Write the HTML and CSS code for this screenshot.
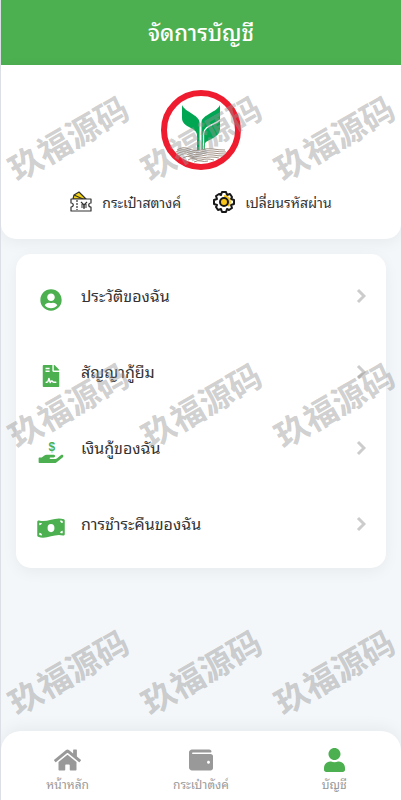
FILE: index.html
```html
<!DOCTYPE html>
<html lang="th">
<head>
    <meta charset="UTF-8">
    <meta name="viewport" content="width=device-width, initial-scale=1.0">
    <title>จัดการบัญชี</title>
    <link rel="stylesheet" href="styles.css">
</head>
<body>

    <header class="header">
        <h1>จัดการบัญชี</h1>
    </header>

    <main>
        <!-- Profile -->
        <section class="profile">
            <svg class="logo" viewBox="0 0 80 80" role="img" aria-label="Logo">
                <circle cx="40" cy="40" r="37" fill="#fff" stroke="#ee1c2e" stroke-width="6"/>
                <path fill="#00a651" d="M21 15c3 7 17 10 17.500 17v28H36V45c0-8-15-7-15-17z"/>
                <path fill="#00a651" d="M59 15c-3 7-18 10-18.500 17v28H44v-6c1-5 15-5 15-16z"/>
                <path fill="none" stroke="#fff" stroke-width="1.300" d="M59 30c-5 5-16 5-16.500 14v16"/>
                <g fill="none" stroke="#a39488" stroke-width="1">
                    <path d="M16 60q6-4 12-1t12 1 12-1 12 1"/>
                    <path d="M15 62q6-4 13-1t12 1 12-1 13 1"/>
                    <path d="M16 64q6-4 12-1t12 1 12-1 12 1"/>
                    <path d="M18 66q5-4 10-1t12 1 12-1 10 1"/>
                    <path d="M22 68q4-3 8-1t10 1 10-1 8 1"/>
                    <path d="M27 70q4-3 7-1t6 1 6-1 7 1"/>
                    <path d="M33 72q4-2 7-1t7 0"/>
                </g>
            </svg>

            <div class="actions">
                <a href="#">
                    <svg class="action-icon" viewBox="0 0 22 22" fill="none" stroke="#333" stroke-width="1.200" stroke-linejoin="round">
                        <path fill="#f5d414" d="M3 8l1-4 5-3 7 7z"/>
                        <path d="M4 4l9 4"/>
                        <path fill="#fff" d="M1 8h20v4c-3 0-3 4 0 4v4H1v-4c3 0 3-4 0-4z"/>
                        <path d="M7 9v10" stroke-dasharray="2 1"/>
                        <path d="M11 11l3 3 3-3M14 14v4M11 14h6M11 16h6"/>
                    </svg>
                    <span>กระเป๋าสตางค์</span>
                </a>
                <a href="#">
                    <svg class="action-icon" viewBox="0 0 22 22" fill="none" stroke="#181818" stroke-width="2" stroke-linejoin="round">
                        <path d="M9 1h4l1 3 3-1 2 3-1 2 3 1v4l-3 1 1 3-3 2-2-1-1 3H9l-1-3-3 1-2-3 1-2-3-1V9l3-1-1-3 3-2 2 1z"/>
                        <path stroke="#f8c51c" d="M11 5a6 6 0 0 1 6 6 6 6 0 0 1-2 4"/>
                        <circle cx="11" cy="11" r="4" fill="#f8c51c"/>
                    </svg>
                    <span>เปลี่ยนรหัสผ่าน</span>
                </a>
            </div>
        </section>

        <!-- Account menu -->
        <nav class="menu">
            <a href="#">
                <svg class="menu-icon" viewBox="0 0 496 512"><path d="M248 8C111 8 0 119 0 256s111 248 248 248 248-111 248-248S385 8 248 8zm0 96c48.600 0 88 39.400 88 88s-39.400 88-88 88-88-39.400-88-88 39.400-88 88-88zm0 344c-58.700 0-111.300-26.600-146.500-68.200 18.800-35.400 55.600-59.800 98.500-59.800 2.400 0 4.800.4 7.100 1.100 13 4.200 26.600 6.900 40.900 6.900 14.300 0 28-2.700 40.900-6.900 2.300-.7 4.700-1.100 7.100-1.100 42.900 0 79.700 24.400 98.500 59.800C359.300 421.400 306.700 448 248 448z"/></svg>
                <span>ประวัติของฉัน</span>
                <svg class="chevron" viewBox="0 0 10 16"><path d="M2 2l6 6-6 6"/></svg>
            </a>
            <a href="#">
                <svg class="menu-icon" viewBox="0 0 384 512">
                    <path d="M224 136V0H24C10.700 0 0 10.700 0 24v464c0 13.300 10.700 24 24 24h336c13.300 0 24-10.700 24-24V160H248c-13.200 0-24-10.800-24-24zM377 105L279 7c-4-4-10-7-17-7h-6v128h128v-6c0-6-2-12-7-17z"/>
                    <path fill="#fff" d="M64 64h96v32H64zM64 128h96v32H64z"/>
                    <path fill="none" stroke="#fff" stroke-width="34" stroke-linecap="round" stroke-linejoin="round" d="M80 400h16c18 0 22-8 27-22l21-64 31 94c18-44 44-44 58-18 6 8 14 10 23 10h48"/>
                </svg>
                <span>สัญญากู้ยืม</span>
                <svg class="chevron" viewBox="0 0 10 16"><path d="M2 2l6 6-6 6"/></svg>
            </a>
            <a href="#">
                <svg class="menu-icon" viewBox="0 0 576 512">
                    <path d="M565.300 328.100c-11.800-10.700-30.200-10-42.600 0L430.300 402c-11.300 9.100-25.400 14-40 14H272c-8.800 0-16-7.200-16-16s7.200-16 16-16h78.300c15.900 0 30.700-10.900 33.300-26.600 3.300-20-12.100-37.400-31.600-37.400H192c-27 0-53.100 9.300-74.100 26.300L71.400 384H16c-8.800 0-16 7.200-16 16v96c0 8.800 7.200 16 16 16h356.800c14.500 0 28.600-4.900 40-14L564 377c15.200-12.100 16.400-35.300 1.300-48.900z"/>
                    <text class="dollar" x="310" y="222" text-anchor="middle">$</text>
                </svg>
                <span>เงินกู้ของฉัน</span>
                <svg class="chevron" viewBox="0 0 10 16"><path d="M2 2l6 6-6 6"/></svg>
            </a>
            <a href="#">
                <svg class="menu-icon" viewBox="0 0 640 512">
                    <path d="M621.160 54.460C582.370 38.190 543.550 32 504.750 32c-123.170 0-246.330 62.340-369.500 62.340-30.890 0-61.760-3.920-92.650-13.720-3.470-1.100-6.950-1.620-10.350-1.620C15.040 79 0 92.320 0 110.810v317.260c0 12.630 7.230 24.600 18.840 29.460C57.630 473.810 96.450 480 135.250 480c123.170 0 246.340-62.350 369.510-62.350 30.890 0 61.760 3.920 92.650 13.720 3.470 1.100 6.950 1.620 10.350 1.620 17.210 0 32.250-13.320 32.250-31.810V83.930c0-12.640-7.240-24.600-18.850-29.470z"/>
                    <g fill="#fff">
                        <ellipse cx="320" cy="256" rx="80" ry="96"/>
                        <path d="M48 132c20 5 40 8 61 10-3 29-30 50-61 50zM48 369c35 0 63 26 64 62-22-1-44-5-64-11zM592 380c-19-5-38-8-58-9 3-28 28-49 58-49zM592 142c-34-1-62-28-62-61 21 0 42 4 62 11z"/>
                    </g>
                </svg>
                <span>การชำระคืนของฉัน</span>
                <svg class="chevron" viewBox="0 0 10 16"><path d="M2 2l6 6-6 6"/></svg>
            </a>
        </nav>
    </main>

    <!-- Watermark -->
    <div class="watermark" aria-hidden="true">
        <span>玖福源码</span><span>玖福源码</span><span>玖福源码</span>
        <span>玖福源码</span><span>玖福源码</span><span>玖福源码</span>
        <span>玖福源码</span><span>玖福源码</span><span>玖福源码</span>
    </div>

    <!-- Bottom tabs -->
    <nav class="tabs">
        <a href="#">
            <svg viewBox="0 0 576 512"><path d="M280.370 148.260L96 300.110V464a16 16 0 0 0 16 16l112.060-.29a16 16 0 0 0 15.920-16V368a16 16 0 0 1 16-16h64a16 16 0 0 1 16 16v95.640a16 16 0 0 0 16 16.050L464 480a16 16 0 0 0 16-16V300L295.670 148.260a12.190 12.190 0 0 0-15.300 0zM571.600 251.470L488 182.560V44.050a12 12 0 0 0-12-12h-56a12 12 0 0 0-12 12v72.610L318.470 43a48 48 0 0 0-61 0L4.340 251.470a12 12 0 0 0-1.600 16.900l25.500 31A12 12 0 0 0 45.150 301l235.220-193.740a12.190 12.190 0 0 1 15.300 0L530.900 301a12 12 0 0 0 16.900-1.600l25.500-31a12 12 0 0 0-1.700-16.930z"/></svg>
            <span>หน้าหลัก</span>
        </a>
        <a href="#">
            <svg viewBox="0 0 512 512"><path d="M461.200 128H80c-8.840 0-16-7.160-16-16s7.160-16 16-16h384c8.840 0 16-7.160 16-16 0-26.510-21.490-48-48-48H64C28.650 32 0 60.650 0 96v320c0 35.350 28.650 64 64 64h397.200c28.020 0 50.800-21.530 50.800-48V176c0-26.470-22.780-48-50.800-48zM416 336c-17.670 0-32-14.330-32-32s14.330-32 32-32 32 14.330 32 32-14.330 32-32 32z"/></svg>
            <span>กระเป๋าตังค์</span>
        </a>
        <a href="#" class="active">
            <svg viewBox="0 0 448 512"><path d="M224 256c70.700 0 128-57.300 128-128S294.700 0 224 0 96 57.300 96 128s57.300 128 128 128zm89.600 32h-16.700c-22.200 10.200-46.900 16-72.900 16s-50.600-5.800-72.900-16h-16.700C60.200 288 0 348.200 0 422.400V464c0 26.500 21.500 48 48 48h352c26.500 0 48-21.500 48-48v-41.600c0-74.200-60.200-134.400-134.400-134.400z"/></svg>
            <span>บัญชี</span>
        </a>
    </nav>

</body>
</html>
```
FILE: styles.css
```css
/* General */
* {
    box-sizing: border-box;
}

body {
    margin: 0;
    min-height: 100vh;
    position: relative;
    display: flex;
    flex-direction: column;
    border-left: 1px solid #dcdfe6;
    background-color: #f3f7fa;
    color: #333;
    font-family: Tahoma, "Noto Sans Thai Looped", "Noto Sans", sans-serif;
}

main {
    flex: 1;
}

a {
    color: inherit;
    text-decoration: none;
}

/* Header */
.header {
    display: flex;
    align-items: center;
    justify-content: center;
    height: 65px;
    padding-bottom: 4px;
    background-color: #4caf50;
    color: white;
}

h1 {
    margin: 0;
    font-size: 22px;
    line-height: 30px;
    font-weight: 500;
}

/* Profile */
.profile {
    display: flex;
    flex-direction: column;
    align-items: center;
    gap: 20px;
    padding: 25px 20px;
    background-color: white;
    border-radius: 0 0 15px 15px;
    box-shadow: 0 4px 15px rgba(0,0,0,0.05);
}

.logo {
    width: 80px;
    height: 80px;
}

.actions {
    display: flex;
    gap: 32px;
    font-size: 14px;
    line-height: 24px;
}

.actions a {
    display: flex;
    align-items: center;
    gap: 10px;
}

.action-icon {
    width: 22px;
    height: 22px;
}

/* Menu */
.menu {
    margin: 15px;
    padding: 5px 20px;
    background-color: white;
    border-radius: 15px;
    box-shadow: 0 4px 15px rgba(0,0,0,0.05);
}

.menu a {
    display: flex;
    align-items: center;
    gap: 15px;
    height: 76px;
    padding-bottom: 2px;
    font-size: 16px;
    line-height: 24px;
}

.menu span {
    flex: 1;
    padding-bottom: 2px;
}

.menu-icon {
    width: 30px;
    height: 22px;
    margin-top: 8px;
    fill: #4caf50;
}

.dollar {
    font: bold 280px "Liberation Sans", sans-serif;
}

.chevron {
    width: 10px;
    height: 16px;
    fill: none;
    stroke: #ccc;
    stroke-width: 3;
}

/* Watermark */
.watermark {
    position: absolute;
    inset: 0;
    display: grid;
    grid-template-columns: repeat(3, minmax(0, 1fr));
    grid-auto-rows: 267px;
    place-items: center;
    padding-top: 4px;
    overflow: hidden;
    pointer-events: none;
    color: rgba(150,150,150,0.46);
    font-family: "Noto Sans CJK SC", sans-serif;
    font-size: 33px;
    line-height: 1;
    font-weight: bold;
}

.watermark span {
    white-space: nowrap;
    transform: rotate(-30deg);
}

/* Bottom tabs */
.tabs {
    position: sticky;
    bottom: 0;
    display: grid;
    grid-template-columns: repeat(3, 1fr);
    padding: 17px 0 6px;
    background-color: white;
    border-radius: 20px 20px 0 0;
    box-shadow: 0 -4px 15px rgba(0,0,0,0.05);
}

.tabs a {
    display: flex;
    flex-direction: column;
    align-items: center;
    gap: 2px;
    color: #999;
    font-size: 12px;
    line-height: 20px;
}

.tabs svg {
    height: 24px;
    fill: currentColor;
}

.tabs .active svg {
    fill: #4caf50;
}
```
